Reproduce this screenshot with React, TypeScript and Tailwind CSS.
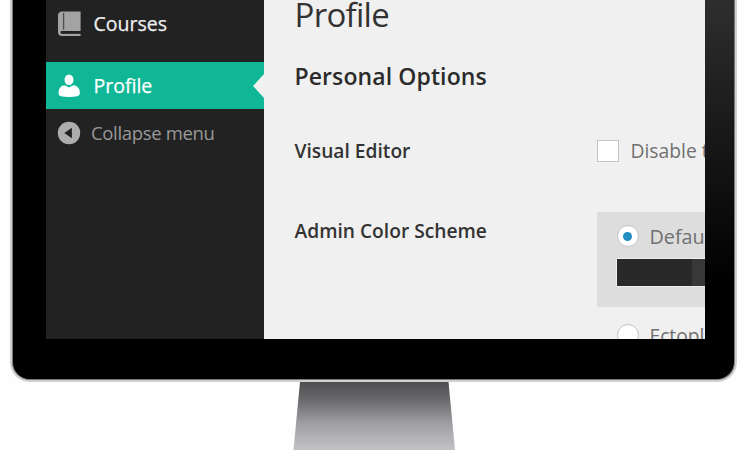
import React from "react";

function BookIcon() {
  return (
    <svg width="24" height="26" viewBox="0 0 24 26" className="block shrink-0">
      <path d="M4.6 0.5H23.6V20H5.2q-1.8 0-1.8 1.4t1.8 1.4H23.6V25H5Q1 25 1 21V4.5Q1 1 4.6 .5Z" fill="#a3a3a3" />
      <path d="M6.6 1.8V18.6" stroke="#4c4c52" strokeWidth="1.3" />
      <path d="M5 21.5H23.6" stroke="#222" strokeWidth="1.9" />
    </svg>
  );
}

function UserIcon() {
  return (
    <svg width="24" height="24" viewBox="0 0 24 24" className="block shrink-0">
      <ellipse cx="12" cy="5.8" rx="4.5" ry="5.3" fill="#fff" />
      <path d="M7.2 11.3Q9 11.6 12 13.4Q15 11.6 16.8 11.3Q22.8 12.4 22.8 18.6V20Q22.8 22.9 12 22.9T1.6 20V18.6Q1.6 12.4 7.2 11.3Z" fill="#fff" />
    </svg>
  );
}

function CollapseIcon() {
  return (
    <svg width="24" height="24" viewBox="0 0 24 24" className="block shrink-0">
      <circle cx="12" cy="12" r="11.2" fill="#adadad" />
      <path d="M14.9 6.8V17.2L7.3 12Z" fill="#222" />
    </svg>
  );
}

function Sidebar() {
  return (
    <nav className="flex w-[218px] shrink-0 flex-col bg-[#222222] whitespace-nowrap">
      <div className="flex h-[47px] items-center pl-[11px] text-[19.5px] text-[#eeeeee]">
        <BookIcon />
        <span className="ml-[12.5px] [-webkit-text-stroke:0.25px_#eee]">Courses</span>
      </div>
      <div className="mt-[15px] flex h-[47px] items-center bg-[#0fb796] pl-[11px] text-[19.5px] text-white">
        <UserIcon />
        <span className="ml-[12.5px] [-webkit-text-stroke:0.25px_#fff]">Profile</span>
        <svg width="11" height="24" viewBox="0 0 11 24" className="ml-auto">
          <path d="M11 0V24L0 12Z" fill="#f1f1f1" />
        </svg>
      </div>
      <div className="flex h-[47px] items-center pl-[11px] text-[18.5px] tracking-[-0.34px] text-[#999999]">
        <CollapseIcon />
        <span className="ml-[10px]">Collapse menu</span>
      </div>
    </nav>
  );
}

function Radio({ checked = false }: { checked?: boolean }) {
  return (
    <span className="flex size-[22px] shrink-0 items-center justify-center rounded-full border-[1.5px] border-[#c2c2c2] bg-white">
      {checked && <span className="size-[9px] rounded-full bg-[#238ec2]" />}
    </span>
  );
}

function Settings() {
  return (
    <main className="min-w-0 flex-1 overflow-hidden bg-[#f0f0f0] pl-[30.5px] whitespace-nowrap text-[#333]">
      <h1 className="flex h-[30px] items-center text-[33px] leading-[30px] tracking-[-0.7px]">Profile</h1>
      <h2 className="mt-[28px] flex h-[36px] items-center text-[23px] font-semibold tracking-[0.1px] text-[#2b2b2b]">
        Personal Options
      </h2>
      <div className="mt-[37px] flex h-[40px] items-center text-[19.2px]">
        <span className="w-[302px] shrink-0 pt-px font-semibold">Visual Editor</span>
        <span className="size-[22px] shrink-0 border-[1.5px] border-[#c4c4c4] bg-white" />
        <span className="ml-[12px] pt-px text-[19.3px] text-[#707070]">Disable the visual editor when writing</span>
      </div>
      <div className="mt-[41px] flex text-[19.2px]">
        <span className="flex h-[38px] w-[302px] shrink-0 items-center pt-px font-semibold">Admin Color Scheme</span>
        <div className="w-[300px] shrink-0 text-[#707070]">
          <div className="h-[95px] bg-[#dddddd] pl-[20px]">
            <div className="flex h-[48px] items-center gap-[11px] text-[19.8px]">
              <Radio checked />
              <span className="pt-px">Default</span>
            </div>
            <div className="-mt-[2px] -ml-px flex h-[29px] border border-r-0 border-[#efefef] bg-[#292929]">
              <span className="ml-[75px] flex-1 bg-[#383838]" />
            </div>
          </div>
          <div className="mt-[5px] flex h-[46px] items-center gap-[11px] pl-[20px]">
            <Radio />
            <span className="pt-[2px]">Ectoplasm</span>
          </div>
        </div>
      </div>
    </main>
  );
}

export default function App() {
  return (
    <div className="flex h-[450px] w-[750px] flex-col overflow-hidden bg-[#fefefe] pl-[10px] font-['Open_Sans','Noto_Sans',sans-serif]">
      <div className="h-[382px] w-[727px] shrink-0 rounded-b-[20px] bg-[#d0d0d0] px-[2px] pb-[2px]">
        <div className="h-full rounded-b-[18px] border-x border-b border-[#777] bg-[linear-gradient(to_bottom,#2e2e2e_0%,#000_75%)]">
          <div className="h-full rounded-b-[17px] bg-[linear-gradient(to_right,#000_0%,#000_50%,transparent_50%)] pl-[33px]">
            <div className="flex h-[339px] w-[659px] overflow-hidden">
              <Sidebar />
              <Settings />
            </div>
          </div>
        </div>
      </div>
      <svg width="164" height="68" viewBox="0 0 164 68" className="ml-[282px] block shrink-0">
        <defs>
          <linearGradient id="stand" x1="0" y1="0" x2="0" y2="1">
            <stop offset="0" stopColor="#4d4e50" />
            <stop offset=".25" stopColor="#68686b" />
            <stop offset=".6" stopColor="#9e9ea2" />
            <stop offset="1" stopColor="#c2c3c7" />
          </linearGradient>
        </defs>
        <path d="M8 0H156.500L163 68H1.500Z" fill="url(#stand)" />
      </svg>
    </div>
  );
}
